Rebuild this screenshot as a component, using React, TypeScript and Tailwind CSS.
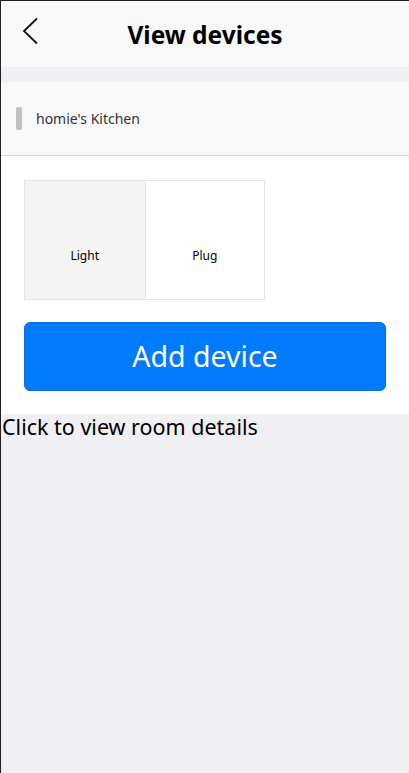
import React from "react";

type Device = {
  id: string;
  name: string;
  active?: boolean;
};

const DEVICES: Device[] = [
  { id: "light", name: "Light", active: true },
  { id: "plug", name: "Plug" },
];

export default function App() {
  return (
    <div
      className="min-h-[773px] border-t border-l border-[#222] bg-[#efeff4] text-black"
      style={{ fontFamily: '"Noto Sans", "Open Sans", sans-serif' }}
    >
      {/* header */}
      <div className="relative flex h-[66px] items-center justify-center bg-[#f8f8f8]">
        <button className="absolute left-[18px] top-[15px] h-[30px] w-[22px]">
          <svg viewBox="0 0 22 30" className="h-[30px] w-[22px]" fill="none">
            <path d="M18 2.5 L5 15 L18 27.5" stroke="#111" strokeWidth="1.8" />
          </svg>
        </button>
        <h1 className="pt-[2px] text-[24.5px] font-bold leading-none">View devices</h1>
      </div>

      <div className="h-[15px]" />

      {/* room */}
      <div className="flex h-[74px] items-center border-b border-[#d9d9d9] bg-[#f8f8f8] pl-[15px]">
        <span className="h-[23px] w-[6px] rounded-[2px] bg-[#c2c2c2]" />
        <span className="ml-[14px] text-[14px] text-[#333]">homie's Kitchen</span>
      </div>

      <div className="bg-white px-[23px] pt-[24px] pb-[23px]">
        <div className="flex w-[241px] border border-[#e4e4e4]">
          {DEVICES.map((d, i) => (
            <div
              key={d.id}
              className={`flex h-[118px] w-[120px] flex-col items-center pt-[67px] ${
                d.active ? "bg-[#f4f4f4]" : "bg-white"
              } ${i > 0 ? "border-l border-[#e4e4e4]" : ""}`}
            >
              <span className="text-[12px] leading-[16px]">{d.name}</span>
            </div>
          ))}
        </div>

        <button className="mt-[22px] flex h-[69px] w-full items-center justify-center rounded-[6px] border border-[#0a6fd8] bg-[#007aff] text-[28.5px] text-white">
          Add device
        </button>
      </div>

      <p className="pl-[1px] text-[21.5px] leading-[26px]">Click to view room details</p>
    </div>
  );
}
